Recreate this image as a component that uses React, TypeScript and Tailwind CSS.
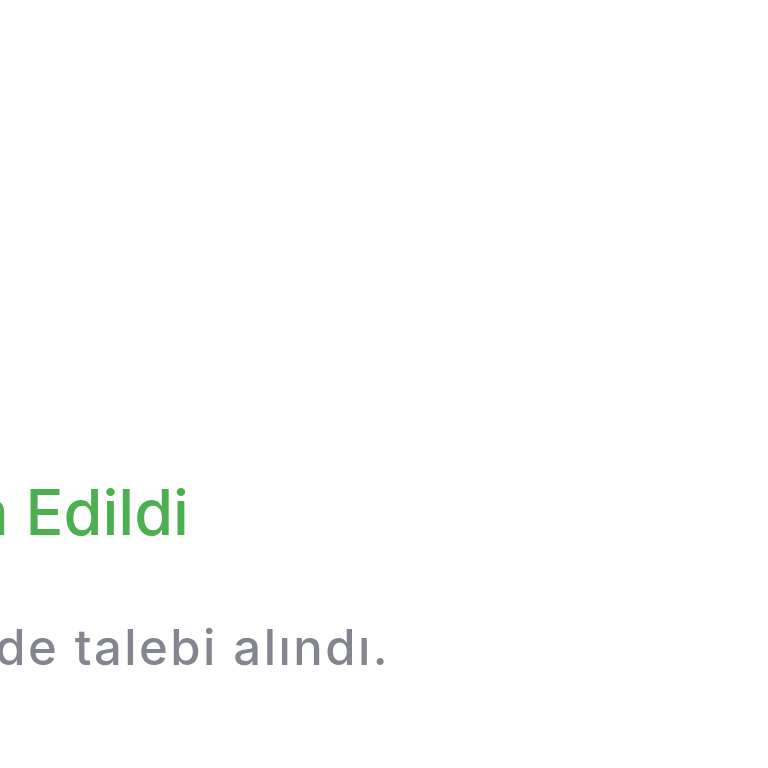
export default function App() {
  return (
    <div className="h-[768px] w-[768px] overflow-hidden bg-white font-['Inter','Noto_Sans',sans-serif]">
      <div className="flex flex-col pt-[481px]">
        <div className="flex w-[189px] justify-end">
          <h1 className="whitespace-nowrap text-[63px] font-medium leading-none text-[#4caf50]">
            Talebiniz Teslim Edildi
          </h1>
        </div>
        <div className="mt-[79px] flex w-[390px] justify-end">
          <p className="whitespace-nowrap text-[49px] font-medium leading-none tracking-[0.05em] text-[#83868f]">
            Siparişiniz için iade talebi alındı.
          </p>
        </div>
      </div>
    </div>
  )
}
